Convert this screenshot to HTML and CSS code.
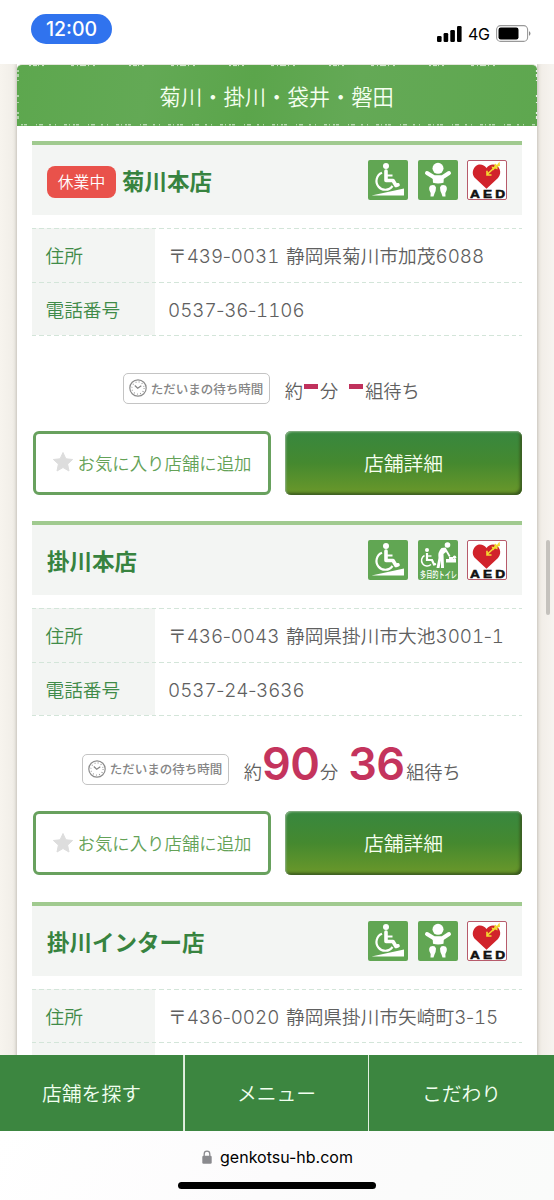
FILE: index.html
```html
<!DOCTYPE html>
<html lang="ja">
<head>
<meta charset="utf-8">
<title>店舗一覧</title>
<link rel="stylesheet" href="styles.css">
</head>
<body>
<svg class="defs" width="0" height="0">
  <defs>
    <symbol id="wheelchair" viewBox="0 0 40 40">
      <rect width="40" height="40" rx="2" fill="#61a653"/>
      <circle cx="18" cy="6" r="3" fill="#fff"/>
      <path d="M18 11V20.500H25L28 25.500L30 24.800" fill="none" stroke="#fff" stroke-width="3.600" stroke-linejoin="round" stroke-linecap="round"/>
      <path d="M18 15.500H24.500" stroke="#fff" stroke-width="2"/>
      <path d="M14 12.800A8.800 8.800 0 1 0 24.500 26" fill="none" stroke="#fff" stroke-width="2.200"/>
      <path d="M3.500 35.500L36 28.500V35.500Z" fill="#fff"/>
    </symbol>
    <symbol id="baby" viewBox="0 0 40 40">
      <rect width="40" height="40" rx="2" fill="#61a653"/>
      <circle cx="20" cy="8.300" r="5.500" fill="#fff"/>
      <path d="M9 13L16 17.200H24.500L31 13" fill="none" stroke="#fff" stroke-width="4" stroke-linecap="round" stroke-linejoin="round"/>
      <path d="M14.500 16H26L25.500 22.800Q20 24 15 22.800Z" fill="#fff"/>
      <path d="M12.500 25.500Q17 24 18 27.500Q18 31 16.500 33.500L15.500 36.500H12.500Q13.500 33 11.500 30.500Q10.500 27 12.500 25.500Z" fill="#fff"/>
      <path d="M27.500 25.500Q23 24 22 27.500Q22 31 23.500 33.500L24.500 36.500H27.500Q26.500 33 28.500 30.500Q29.500 27 27.500 25.500Z" fill="#fff"/>
    </symbol>
    <symbol id="toilet" viewBox="0 0 40 40">
      <rect width="40" height="40" rx="2" fill="#61a653"/>
      <circle cx="9" cy="10" r="2" fill="#fff"/>
      <path d="M9 13V20H14L16 24.500L18 24" fill="none" stroke="#fff" stroke-width="2.200"/>
      <path d="M9 16H13.500" stroke="#fff" stroke-width="1.300"/>
      <path d="M6.500 15.500A5.600 5.600 0 1 0 13 24.500" fill="none" stroke="#fff" stroke-width="1.500"/>
      <circle cx="29.500" cy="5" r="2.800" fill="#fff"/>
      <path d="M27.500 7.500L23.500 8Q19.500 12 20.500 18L18.500 28H21.500L23 20.500V28H26L25.500 14L28 12L31 17L32.500 16Z" fill="#fff"/>
      <path d="M28 19H38V22.500H28ZM31 17H35V19H31Z" fill="#fff"/>
      <circle cx="36.500" cy="17.300" r="1.700" fill="#fff"/>
      <text x="2" y="38" textLength="37" lengthAdjust="spacingAndGlyphs" class="toilet-text">多目的トイレ</text>
    </symbol>
    <symbol id="aed" viewBox="0 0 40 40">
      <rect x=".5" y=".5" width="39" height="39" rx="1.500" fill="#fff" stroke="#b75b6b"/>
      <path d="M19.500 28.800L8 18C3 12.500 7.500 4.500 13 4.500Q17 4.500 19.500 8Q22 4.500 26 4.500C32 4.500 36 12.500 31 18Z" fill="#d1232b"/>
      <path d="M20 14.500L26 9M20 10.800V15H24.500" fill="none" stroke="#f3dc31" stroke-width="1.600"/>
      <path d="M24.500 6.500L27 7L28 3.500L30 5L32.500 1.500L33 6L30.500 6.500L30.500 9.500L28 8.500L26 10.500Z" fill="#f3dc31"/>
      <g transform="translate(3 38) scale(1.300 1)"><text x="0" y="0" textLength="27" lengthAdjust="spacing" class="aed-text">AED</text></g>
    </symbol>
    <symbol id="clock" viewBox="0 0 18 18">
      <circle cx="9" cy="9" r="8.200" fill="none" stroke="#8c8c8c" stroke-width="1.200"/>
      <circle cx="9" cy="9" r="6.100" fill="none" stroke="#8c8c8c" stroke-width="1.200" stroke-dasharray=".8 2.394"/>
      <path d="M5.800 6.500L8.700 9.300L12.300 6.800" fill="none" stroke="#858585" stroke-width="1.200"/>
    </symbol>
    <symbol id="star" viewBox="0 0 20 20">
      <path d="M10 .5L12.900 6.800L19.600 7.500L14.600 12.100L16 19L10 15.500L4 19L5.400 12.100L.4 7.500L7.100 6.800Z" fill="#ddd" stroke="#ddd" stroke-linejoin="round"/>
    </symbol>
  </defs>
</svg>

<header class="status">
  <span class="time">12:00</span>
  <svg class="signal" width="25" height="16" viewBox="0 0 25 16">
    <rect x="0" y="10" width="4.600" height="6" rx="1.200"/><rect x="6.600" y="7" width="4.600" height="9" rx="1.200"/><rect x="13.300" y="4" width="4.600" height="12" rx="1.200"/><rect x="20" y="0" width="4.600" height="16" rx="1.200"/>
  </svg>
  <span class="network">4G</span>
  <svg class="battery" width="36" height="17" viewBox="0 0 36 17">
    <rect x=".6" y=".6" width="31" height="15.800" rx="4" fill="#fff" stroke="#999" stroke-width="1.100"/>
    <rect x="2.500" y="2.500" width="20" height="12" rx="2.200"/>
    <path d="M33 6Q36 8.500 33 11Z" fill="#888"/>
  </svg>
</header>

<main class="page">
  <div class="sheet">
    <h2 class="region">
      <svg class="region-edge" width="521" height="62" viewBox="0 0 521 62" fill="none" stroke="#fff">
        <path d="M12 1.600H508" stroke-dasharray="2 2 4 1 1 3 2 27 3 3 1 2 6 2 1 4 2 34" stroke-width=".9" opacity=".85"/>
        <path d="M4 60.800H518" stroke-dasharray="2 1 3 9 1 2 4 6 2 4 1 8 3 2 1 3" stroke-width="1" opacity=".8"/>
        <path d="M1 6V56M519.500 6V56" stroke-dasharray="2 2 3 3 1 14 2 5 1 9" stroke-width="1.200" opacity=".85"/>
      </svg>
      <span>菊川・掛川・袋井・磐田</span>
    </h2>

    <section class="shop">
      <div class="shop-head">
        <span class="closed">休業中</span>
        <h3>菊川本店</h3>
        <div class="icons"><svg><use href="#wheelchair"/></svg><svg><use href="#baby"/></svg><svg><use href="#aed"/></svg></div>
      </div>
      <dl class="info">
        <dt>住所</dt><dd>〒<b>439<i>-</i>0031</b> 静岡県菊川市加茂<b>6088</b></dd>
        <dt>電話番号</dt><dd><b>0537<i>-</i>36<i>-</i>1106</b></dd>
      </dl>
      <div class="wait">
        <span class="wait-label"><svg><use href="#clock"/></svg>ただいまの待ち時間</span>
        <span>約</span><i class="dash"></i><span>分</span><i class="dash second"></i><span>組待ち</span>
      </div>
      <div class="buttons">
        <a class="favorite"><svg><use href="#star"/></svg>お気に入り店舗に追加</a>
        <a class="detail">店舗詳細</a>
      </div>
    </section>

    <section class="shop">
      <div class="shop-head">
        <h3>掛川本店</h3>
        <div class="icons"><svg><use href="#wheelchair"/></svg><svg><use href="#toilet"/></svg><svg><use href="#aed"/></svg></div>
      </div>
      <dl class="info">
        <dt>住所</dt><dd>〒<b>436<i>-</i>0043</b> 静岡県掛川市大池<b>3001<i>-</i>1</b></dd>
        <dt>電話番号</dt><dd><b>0537<i>-</i>24<i>-</i>3636</b></dd>
      </dl>
      <div class="wait">
        <span class="wait-label"><svg><use href="#clock"/></svg>ただいまの待ち時間</span>
        <span>約</span><strong>90</strong><span>分</span><strong class="second">36</strong><span>組待ち</span>
      </div>
      <div class="buttons">
        <a class="favorite"><svg><use href="#star"/></svg>お気に入り店舗に追加</a>
        <a class="detail">店舗詳細</a>
      </div>
    </section>

    <section class="shop">
      <div class="shop-head">
        <h3>掛川インター店</h3>
        <div class="icons"><svg><use href="#wheelchair"/></svg><svg><use href="#baby"/></svg><svg><use href="#aed"/></svg></div>
      </div>
      <dl class="info">
        <dt>住所</dt><dd>〒<b>436<i>-</i>0020</b> 静岡県掛川市矢崎町<b>3<i>-</i>15</b></dd>
        <dt></dt><dd></dd>
      </dl>
    </section>
  </div>
  <div class="scrollbar"></div>
</main>

<nav class="tabs">
  <a>店舗を探す</a><a>メニュー</a><a>こだわり</a>
</nav>

<footer class="browser">
  <div class="address">
    <svg width="10" height="14" viewBox="0 0 10 14"><path d="M2.200 6V4A2.800 2.800 0 0 1 7.800 4V6" fill="none" stroke="#8a8a8e" stroke-width="1.300"/><rect x=".3" y="5.800" width="9.400" height="8" rx="1.300" fill="#8a8a8e"/></svg>
    <span>genkotsu-hb.com</span>
  </div>
  <div class="home"></div>
</footer>
</body>
</html>
```
FILE: styles.css
```css
* { box-sizing: border-box; }
body {
  margin: 0;
  width: 554px;
  height: 1200px;
  overflow: hidden;
  display: flex;
  flex-direction: column;
  background: #fff;
  font-family: "Noto Sans CJK JP", sans-serif;
  font-weight: 350;
  color: #606060;
}
h2, h3, dl, dd { margin: 0; }
.defs { position: absolute; }

.status {
  height: 64px;
  flex: none;
  display: flex;
  align-items: center;
  padding: 3px 22px 0 31px;
  font-family: Inter, sans-serif;
  color: #000;
}
.time {
  width: 81px;
  height: 30px;
  margin: -10px auto 0 0;
  border-radius: 15px;
  background: #3073ee;
  color: #fff;
  font-size: 19.500px;
  font-weight: 500;
  line-height: 30px;
  text-align: center;
}
.signal { margin-right: 6px; }
.network { margin-right: 6px; width: 22px; font-size: 16px; font-weight: 400; letter-spacing: -.3px; }

.page {
  flex: 1;
  position: relative;
  overflow: hidden;
  background: linear-gradient(90deg, #f7f4ee, #f1eee8 14px, #f1ede7 540px, #f7f4f0);
}
.sheet {
  width: 520.500px;
  height: 1100px;
  margin-left: 16.500px;
  background: #fff;
  box-shadow: 0 0 4px rgba(70, 65, 50, .4);
}
.region {
  position: relative;
  height: 62px;
  margin-bottom: 15px;
  border-top: 1.500px solid #e4e7dc;
  background: linear-gradient(100deg, #5da74e, #63a955 25%, #5ba54b 45%, #64a956 65%, #5ea74f);
  color: #f5fff0;
  font-size: 21.300px;
  font-weight: 350;
  line-height: 61px;
  text-align: center;
  border-radius: 5px 5px 0 0;
}
.region-edge { position: absolute; left: 0; top: -1px; }

.shop { height: 380.300px; margin: 0 15.500px 0 15.500px; }
.shop-head {
  height: 74px;
  display: flex;
  align-items: center;
  padding: 0 14.500px 0 15px;
  border-top: 4px solid #a0ca8f;
  background: #f3f5f3;
}
.closed {
  width: 69px;
  height: 32px;
  margin: 3px 6px 0 0;
  border-radius: 8px;
  background: #e9524b;
  color: #fff;
  font-size: 15.800px;
  line-height: 31px;
  text-align: center;
}
h3 { color: #37833f; font-size: 22.500px; font-weight: 700; line-height: 30px; }
.icons { display: flex; gap: 9.500px; margin-left: auto; }
.icons svg { width: 40px; height: 40px; display: block; }
.aed-text { font: 900 10.500px "Liberation Sans", Arial, sans-serif; fill: #111; stroke: #111; stroke-width: .5px; }
.toilet-text { font: 500 9.500px "Noto Sans CJK JP", sans-serif; fill: #fff; }

.info {
  margin-top: 13px;
  display: grid;
  grid-template-columns: 123px 1fr;
  grid-template-rows: 53.600px 53.600px;
  background:
    repeating-linear-gradient(90deg, #d3e5d9 0 4.500px, transparent 4.500px 7.500px) 0 0 / 100% 1.300px no-repeat,
    repeating-linear-gradient(90deg, #d3e5d9 0 4.500px, transparent 4.500px 7.500px) 0 53.600px / 100% 1.300px no-repeat,
    repeating-linear-gradient(90deg, #d3e5d9 0 4.500px, transparent 4.500px 7.500px) 0 107.200px / 100% 1.300px no-repeat,
    linear-gradient(#f3f5f3, #f3f5f3) 0 0 / 123px 107px no-repeat;
  padding-bottom: 1.300px;
  font-size: 18.700px;
  line-height: 53px;
  word-spacing: 2.500px;
  white-space: nowrap;
}
dt { padding-left: 13.500px; color: #3f8b48; }
dd { padding-left: 13px; }
dd b {
  font-family: Inter, sans-serif;
  font-size: 18.800px;
  font-weight: 300;
  font-variant-numeric: tabular-nums;
}
dd i { font-style: normal; margin: 0 -2.300px; }

.wait {
  height: 94px;
  display: flex;
  align-items: flex-end;
  justify-content: center;
  padding: 0 11px 26px 0;
  font-size: 18.200px;
  line-height: 27px;
}
.wait-label {
  width: 147px;
  height: 31px;
  display: flex;
  align-items: center;
  gap: 4px;
  margin-right: 15px;
  padding: 0 0 1px 5px;
  border: 1.500px solid #c4c4c4;
  border-radius: 5px;
  color: #858585;
  font-size: 12.500px;
  font-weight: 500;
  white-space: nowrap;
}
.wait-label svg { width: 18px; height: 18px; flex: none; }
.dash { width: 14px; height: 5px; margin: 0 2px 15px 1px; background: #c0315c; }
.dash.second { margin-left: 11px; }
.wait strong {
  width: 57px;
  margin: 0 1px 1px 0;
  color: #c4345d;
  font: 600 45px/40px Inter, sans-serif;
  letter-spacing: -.5px;
}
.wait strong.second { margin-left: 10px; }

.buttons { display: grid; grid-template-columns: 238px 237px; gap: 14px; padding: .5px 0 0 1px; }
.buttons a { height: 64px; display: flex; align-items: center; justify-content: center; border-radius: 6px; padding-bottom: 1px; }
.buttons .favorite { border: 3px solid #68a15e; color: #64a257; font-size: 17.400px; gap: 5px; }
.favorite svg { width: 20px; height: 20px; }
.detail {
  background: linear-gradient(#37873f, #45892f 50%, #6b982a);
  box-shadow: inset 1px 1px 2px #91b68f, inset -2px -2px 3px #36551c;
  color: #f7fff0;
  font-size: 19.800px;
}
.scrollbar { position: absolute; left: 546px; top: 476px; width: 4px; height: 75px; border-radius: 2px; background: #c5c2bd; }

.tabs { height: 76px; flex: none; display: grid; grid-template-columns: 184px 184px 186px; background: #3c8640; }
.tabs a { color: #f1fff0; font-size: 19.800px; line-height: 75px; text-align: center; }
.tabs a + a { border-left: 1px solid #e3f0e1; }
.tabs a:first-child { border-right: 1px solid #d9ead8; }

.browser { height: 69.500px; flex: none; background: linear-gradient(120deg, #fff, #fcfbfc 50%, #fafbfa); color: #000; }
.address {
  height: 51px;
  display: flex;
  align-items: center;
  justify-content: center;
  gap: 8px;
  padding: 1px 0 0 1px;
  font: 400 16px Inter, sans-serif;
}
.home { width: 198px; height: 7px; margin: 0 auto; border-radius: 4px; background: #000; }
```
